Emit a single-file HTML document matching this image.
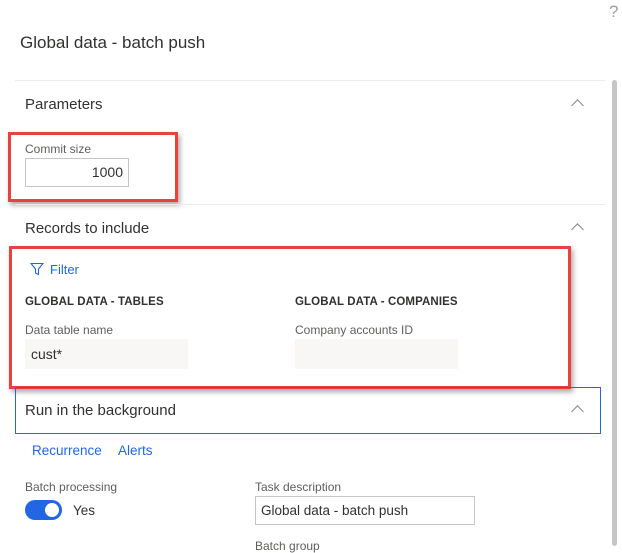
<!DOCTYPE html>
<html><head><style>
body{margin:0;width:622px;height:546px;overflow:hidden;background:#fff;font-family:"Liberation Sans",sans-serif;color:#323130;position:relative}
.a{position:absolute;white-space:nowrap}
.lbl{font-size:12px;color:#605e5c}
.hd{font-size:15px;color:#323130}
.cap{font-size:11.5px;font-weight:bold;color:#323130;letter-spacing:0.1px}
.blue{color:#2266e3}
.chev{position:absolute;width:8px;height:8px;border-left:1px solid #8a8886;border-top:1px solid #8a8886;transform:rotate(45deg)}
.red{position:absolute;border:3px solid #e8413f;box-shadow:2px 3px 5px rgba(0,0,0,.35)}
.line{position:absolute;height:1px;background:#edebe9}
</style></head><body>
<div class="a" style="left:609px;top:2px;font-size:17px;color:#a19f9d">?</div>
<div class="a" style="left:20px;top:33px;font-size:17px">Global data - batch push</div>
<div class="line" style="left:15px;top:80px;width:590px"></div>
<div class="a" style="left:612px;top:80px;width:5px;height:466px;background:#c8c6c4;border-radius:3px"></div>

<div class="a hd" style="left:25px;top:96px">Parameters</div>
<div class="chev" style="left:573px;top:101px"></div>
<div class="red" style="left:8px;top:132px;width:164px;height:64px"></div>
<div class="a lbl" style="left:25px;top:142px">Commit size</div>
<div class="a" style="left:25px;top:158px;width:104px;height:29px;border:1px solid #c8c6c4;box-sizing:border-box;text-align:right;padding-right:5px;line-height:27px;font-size:14px">1000</div>
<div class="line" style="left:15px;top:204px;width:590px"></div>

<div class="a hd" style="left:25px;top:220px">Records to include</div>
<div class="chev" style="left:573px;top:225px"></div>
<div class="red" style="left:9px;top:246px;width:556px;height:137px"></div>
<svg class="a" style="left:30px;top:262px" width="14" height="14" viewBox="0 0 14 14"><path d="M1 1.5h12l-4.5 5.5v5.5l-3-1.5v-4z" fill="none" stroke="#2266e3" stroke-width="1.1"/></svg>
<div class="a blue" style="left:50px;top:262px;font-size:13px">Filter</div>
<div class="a cap" style="left:25px;top:296px">GLOBAL DATA - TABLES</div>
<div class="a cap" style="left:295px;top:296px">GLOBAL DATA - COMPANIES</div>
<div class="a lbl" style="left:25px;top:323px">Data table name</div>
<div class="a lbl" style="left:295px;top:323px">Company accounts ID</div>
<div class="a" style="left:25px;top:339px;width:163px;height:30px;background:#f8f7f6;font-size:14px;line-height:30px;padding-left:6px;box-sizing:border-box">cust*</div>
<div class="a" style="left:295px;top:339px;width:163px;height:30px;background:#f8f7f6"></div>

<div class="a" style="left:15px;top:387px;width:586px;height:47px;border:1px solid #2266e3;box-sizing:border-box"></div>
<div class="a hd" style="left:25px;top:402px">Run in the background</div>
<div class="chev" style="left:573px;top:407px"></div>
<div class="a blue" style="left:32px;top:443px;font-size:13.5px">Recurrence</div>
<div class="a blue" style="left:118px;top:443px;font-size:13.5px">Alerts</div>
<div class="a lbl" style="left:25px;top:480px">Batch processing</div>
<div class="a" style="left:25px;top:500px;width:37px;height:20px;border-radius:10px;background:#2266e3"></div>
<div class="a" style="left:45px;top:503px;width:14px;height:14px;border-radius:7px;background:#fff"></div>
<div class="a" style="left:73px;top:503px;font-size:13.5px">Yes</div>
<div class="a lbl" style="left:255px;top:480px">Task description</div>
<div class="a" style="left:255px;top:496px;width:220px;height:29px;border:1px solid #c8c6c4;box-sizing:border-box;font-size:13.5px;line-height:27px;padding-left:5px">Global data - batch push</div>
<div class="a lbl" style="left:255px;top:539px">Batch group</div>
</body></html>
